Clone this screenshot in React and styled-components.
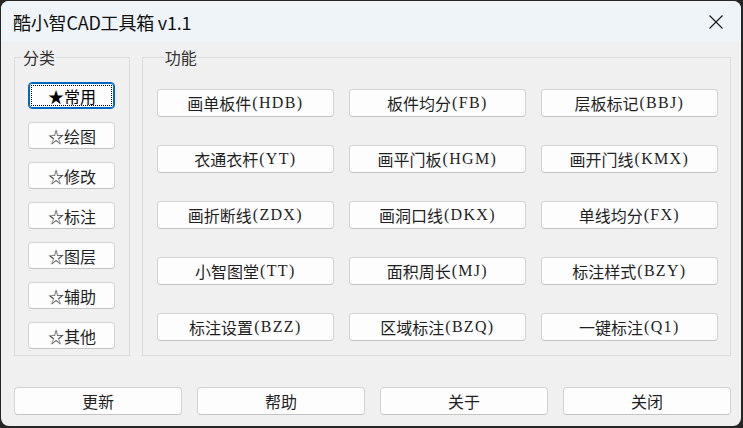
import React from "react";
import styled, { createGlobalStyle } from "styled-components";

const GlobalStyle = createGlobalStyle`
    html, body {
        margin: 0;
        padding: 0;
        background: #2a2a2a;
    }
    * {
        box-sizing: border-box;
    }
`;

const Screen = styled.div`
    width: 743px;
    height: 428px;
    padding: 1px 2px 2px 1px;
    background: #262626;
`;

const Window = styled.div`
    height: 100%;
    display: flex;
    flex-direction: column;
    background: #f0f0f0;
    border-radius: 8px;
    overflow: hidden;
`;

const TitleBar = styled.div`
    height: 41px;
    flex: none;
    display: flex;
    align-items: center;
    justify-content: space-between;
    padding: 1px 18px 0 12px;
    background: #eef4f8;
`;

const Title = styled.div`
    font-family: "Noto Sans CJK SC", "Noto Sans", sans-serif;
    font-size: 18px;
    color: #111;
    letter-spacing: -0.2px;
`;

const CloseIcon = styled.svg`
    width: 14px;
    height: 14px;
    display: block;
`;

const Body = styled.div`
    flex: 1;
    display: flex;
    flex-direction: column;
    padding: 5px 10px 11px 13px;
`;

const Groups = styled.div`
    display: flex;
    gap: 12px;
`;

const Group = styled.fieldset`
    margin: 0;
    height: 309px;
    width: ${(p) => p.$width}px;
    border: 1px solid #dadada;
    border-radius: 0;
    padding: ${(p) => p.$pad};
    min-width: 0;
`;

const Legend = styled.legend`
    font-family: "Noto Sans CJK SC", sans-serif;
    font-size: 16px;
    line-height: 20px;
    color: #333;
    padding: 0 1px;
    margin-left: 7px;
`;

const CategoryList = styled.div`
    display: flex;
    flex-direction: column;
    align-items: center;
    gap: 13px;
`;

const FuncGrid = styled.div`
    display: grid;
    grid-template-columns: repeat(3, 177px);
    grid-auto-rows: 28px;
    column-gap: 15px;
    row-gap: 28px;
`;

const Button = styled.button`
    margin: 0;
    padding: 0;
    height: ${(p) => p.$h || 28}px;
    width: ${(p) => (p.$w ? `${p.$w}px` : "auto")};
    background: #fdfdfd;
    border: 1px solid #d3d3d3;
    border-bottom-color: #c4c4c4;
    border-radius: 4px;
    font-family: "Liberation Serif", "Noto Sans CJK SC", serif;
    font-size: 16px;
    color: #1f1f1f;
    display: flex;
    align-items: center;
    justify-content: center;
    white-space: nowrap;

    ${(p) =>
        p.$active &&
        `
        border: 1px solid #0067c0;
        box-shadow: inset 0 0 0 1px #0067c0;
        outline: 1px dotted #000;
        outline-offset: -4px;
        color: #000;
    `}
`;

const Code = styled.span`
    letter-spacing: 1.3px;
    margin-left: 1px;
`;

const Footer = styled.div`
    margin-top: auto;
    display: grid;
    grid-template-columns: repeat(4, 168px);
    column-gap: 15px;
`;

const categories = ["常用", "绘图", "修改", "标注", "图层", "辅助", "其他"];

const functions = [
    ["画单板件", "HDB"], ["板件均分", "FB"], ["层板标记", "BBJ"],
    ["衣通衣杆", "YT"], ["画平门板", "HGM"], ["画开门线", "KMX"],
    ["画折断线", "ZDX"], ["画洞口线", "DKX"], ["单线均分", "FX"],
    ["小智图堂", "TT"], ["面积周长", "MJ"], ["标注样式", "BZY"],
    ["标注设置", "BZZ"], ["区域标注", "BZQ"], ["一键标注", "Q1"],
];

const footer = ["更新", "帮助", "关于", "关闭"];

function App() {
    return (
        <Screen>
            <GlobalStyle />
            <Window>
                <TitleBar>
                    <Title>酷小智CAD工具箱 v1.1</Title>
                    <CloseIcon viewBox="0 0 14 14">
                        <path d="M0.5 0.5 L13.5 13.5 M13.5 0.5 L0.5 13.5" stroke="#1b1b1b" strokeWidth="1.2" fill="none" />
                    </CloseIcon>
                </TitleBar>
                <Body>
                    <Groups>
                        <Group $width={116} $pad="15px 0 0 0">
                            <Legend>分类</Legend>
                            <CategoryList>
                                {categories.map((c, i) => (
                                    <Button key={c} $w={87} $h={27} $active={i === 0}>
                                        {i === 0 ? "★" : "☆"}{c}
                                    </Button>
                                ))}
                            </CategoryList>
                        </Group>
                        <Group $width={590} $pad="22px 0 0 14px">
                            <Legend>功能</Legend>
                            <FuncGrid>
                                {functions.map(([name, code]) => (
                                    <Button key={code}>
                                        {name}<Code>({code})</Code>
                                    </Button>
                                ))}
                            </FuncGrid>
                        </Group>
                    </Groups>
                    <Footer>
                        {footer.map((f) => (
                            <Button key={f}>{f}</Button>
                        ))}
                    </Footer>
                </Body>
            </Window>
        </Screen>
    );
}

export default App;
